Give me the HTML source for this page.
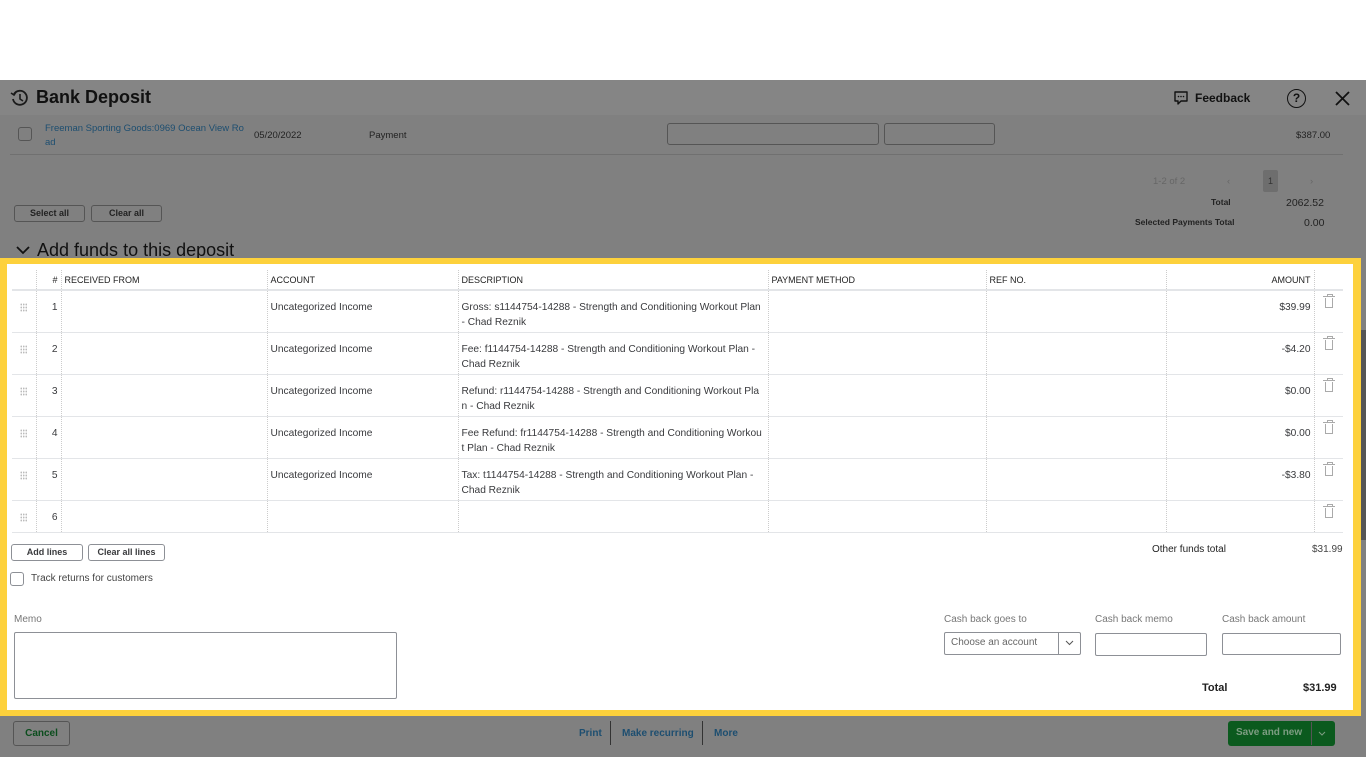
<!DOCTYPE html>
<html><head><meta charset="utf-8"><style>
*{box-sizing:border-box;margin:0;padding:0}
body{width:1366px;height:768px;position:relative;background:#fff;font-family:"Liberation Sans",sans-serif;overflow:hidden;color:#393a3d}
.a{position:absolute}
.gray{background:#808080}
.btn{position:absolute;border:1px solid #555;border-radius:3px;font-size:9px;font-weight:bold;text-align:center;color:#222}
.wbtn{position:absolute;border:1px solid #8d9096;border-radius:3px;font-size:9px;font-weight:bold;text-align:center;color:#393a3d;background:#fff}
table{border-collapse:collapse;position:absolute;left:12px;top:270px;width:1331px;font-size:10.2px;table-layout:fixed}
td,th{border-left:1px dotted #ccc;vertical-align:top;padding:0 3px;overflow:hidden}
th{font-size:9px;text-align:left;font-weight:normal;height:20px;vertical-align:middle;border-bottom:2px solid #e3e5e8;color:#222}
td{height:42px;border-bottom:1px solid #e3e5e8;padding-top:9px;line-height:15px;white-space:nowrap}
tr.last td{height:32px}
tr td:first-child,tr th:first-child{border-left:none}
.r{text-align:right}
.dots{width:7px;height:9px;margin:3px auto 0;background-image:radial-gradient(circle,#bbb 0.8px,transparent 1px);background-size:2.5px 3px}
.trash{display:block;width:8px;height:10px;border:1px solid #aaa;border-top:none;position:relative;margin:-2px auto 0 auto}
.trash:before{content:"";position:absolute;left:-3px;top:-2px;width:12px;height:1px;background:#aaa}
.trash:after{content:"";position:absolute;left:1px;top:-4px;width:4px;height:2px;border:1px solid #aaa;border-bottom:none}
.inp{position:absolute;border:1px solid #8d9096;border-radius:2px;background:#fff}
</style></head><body>
<div class="a gray" style="left:0;top:80px;width:1366px;height:677px"></div>
<div class="a" style="left:0;top:80px;width:1366px;height:35px;background:#858585"></div>
<svg class="a" style="left:10px;top:88px" width="20" height="20" viewBox="0 0 20 20"><path d="M4 6a7 7 0 1 1-1 5" fill="none" stroke="#1a1a1a" stroke-width="1.8"/><path d="M1 5l3 2 2-3" fill="none" stroke="#1a1a1a" stroke-width="1.6"/><path d="M10 6v5l3 2" fill="none" stroke="#1a1a1a" stroke-width="1.6"/></svg>
<div class="a" style="left:36px;top:87px;font-size:18px;font-weight:bold;color:#111">Bank Deposit</div>
<svg class="a" style="left:1173px;top:90px" width="16" height="16" viewBox="0 0 16 16"><path d="M2 2h12v9H8l-3 3v-3H2z" fill="none" stroke="#111" stroke-width="1.4" stroke-linejoin="round"/><circle cx="5.5" cy="6.5" r=".8" fill="#111"/><circle cx="8" cy="6.5" r=".8" fill="#111"/><circle cx="10.5" cy="6.5" r=".8" fill="#111"/></svg>
<div class="a" style="left:1195px;top:91px;font-size:12px;font-weight:bold;color:#111">Feedback</div>
<div class="a" style="left:1287px;top:89px;width:19px;height:19px;border:1.6px solid #111;border-radius:50%;font-size:12px;text-align:center;line-height:16px;color:#111;font-weight:bold">?</div>
<svg class="a" style="left:1335px;top:91px" width="15" height="15"><path d="M1 1l13 13M14 1L1 14" stroke="#111" stroke-width="1.8"/></svg>
<div class="a" style="left:18px;top:127px;width:14px;height:14px;border:1px solid #555;border-radius:3px"></div>
<div class="a" style="left:45px;top:122px;font-size:9.5px;color:#1d4e70;line-height:14px;width:200px">Freeman Sporting Goods:0969 Ocean View Ro<br>ad</div>
<div class="a" style="left:254px;top:130px;font-size:9.5px;color:#222">05/20/2022</div>
<div class="a" style="left:369px;top:130px;font-size:9.5px;color:#222">Payment</div>
<div class="a" style="left:667px;top:123px;width:212px;height:22px;border:1px solid #555;border-radius:3px"></div>
<div class="a" style="left:884px;top:123px;width:111px;height:22px;border:1px solid #555;border-radius:3px"></div>
<div class="a" style="left:1296px;top:130px;font-size:9.5px;color:#222">$387.00</div>
<div class="a" style="left:10px;top:154px;width:1333px;height:1px;background:#707070"></div>
<div class="a" style="left:1153px;top:176px;font-size:9.5px;color:#666">1-2 of 2</div>
<div class="a" style="left:1227px;top:176px;font-size:9.5px;color:#666">‹</div>
<div class="a" style="left:1263px;top:170px;width:15px;height:22px;background:#6e6e6e;border-radius:2px;font-size:9px;text-align:center;line-height:22px;color:#333">1</div>
<div class="a" style="left:1310px;top:176px;font-size:9.5px;color:#666">›</div>
<div class="a" style="left:1211px;top:197px;font-size:8.5px;font-weight:bold;color:#222">Total</div>
<div class="a" style="left:1286px;top:197px;font-size:10.5px;color:#222">2062.52</div>
<div class="a" style="left:1135px;top:217px;font-size:8.5px;font-weight:bold;color:#222">Selected Payments Total</div>
<div class="a" style="left:1304px;top:217px;font-size:10.5px;color:#222">0.00</div>
<div class="btn" style="left:14px;top:205px;width:71px;height:17px;line-height:15px">Select all</div>
<div class="btn" style="left:91px;top:205px;width:71px;height:17px;line-height:15px">Clear all</div>
<svg class="a" style="left:16px;top:246px" width="14" height="9"><path d="M1 1l6 6 6-6" fill="none" stroke="#111" stroke-width="1.8"/></svg>
<div class="a" style="left:37px;top:240px;font-size:18px;color:#111">Add funds to this deposit</div>
<div class="a" style="left:0;top:258px;width:1361px;height:458px;background:#fdd13c"></div>
<div class="a" style="left:7px;top:264px;width:1346px;height:446px;background:#fff"></div>
<div class="a" style="left:1361px;top:330px;width:5px;height:210px;background:#555"></div>
<table>
<colgroup><col style="width:24px"><col style="width:25px"><col style="width:206px"><col style="width:191px"><col style="width:310px"><col style="width:218px"><col style="width:180px"><col style="width:148px"><col style="width:29px"></colgroup>
<tr><th></th><th class="r">#</th><th>RECEIVED FROM</th><th>ACCOUNT</th><th>DESCRIPTION</th><th>PAYMENT METHOD</th><th>REF NO.</th><th class="r">AMOUNT</th><th></th></tr>
<tr><td><div class="dots"></div></td><td class="r">1</td><td></td><td>Uncategorized Income</td><td>Gross: s1144754-14288 - Strength and Conditioning Workout Plan<br>- Chad Reznik</td><td></td><td></td><td class="r">$39.99</td><td><span class="trash"></span></td></tr>
<tr><td><div class="dots"></div></td><td class="r">2</td><td></td><td>Uncategorized Income</td><td>Fee: f1144754-14288 - Strength and Conditioning Workout Plan -<br>Chad Reznik</td><td></td><td></td><td class="r">-$4.20</td><td><span class="trash"></span></td></tr>
<tr><td><div class="dots"></div></td><td class="r">3</td><td></td><td>Uncategorized Income</td><td>Refund: r1144754-14288 - Strength and Conditioning Workout Pla<br>n - Chad Reznik</td><td></td><td></td><td class="r">$0.00</td><td><span class="trash"></span></td></tr>
<tr><td><div class="dots"></div></td><td class="r">4</td><td></td><td>Uncategorized Income</td><td>Fee Refund: fr1144754-14288 - Strength and Conditioning Workou<br>t Plan - Chad Reznik</td><td></td><td></td><td class="r">$0.00</td><td><span class="trash"></span></td></tr>
<tr><td><div class="dots"></div></td><td class="r">5</td><td></td><td>Uncategorized Income</td><td>Tax: t1144754-14288 - Strength and Conditioning Workout Plan -<br>Chad Reznik</td><td></td><td></td><td class="r">-$3.80</td><td><span class="trash"></span></td></tr>
<tr class="last"><td><div class="dots"></div></td><td class="r">6</td><td></td><td></td><td></td><td></td><td></td><td></td><td><span class="trash"></span></td></tr>
</table>
<div class="wbtn" style="left:11px;top:544px;width:72px;height:17px;line-height:15px">Add lines</div>
<div class="wbtn" style="left:88px;top:544px;width:77px;height:17px;line-height:15px">Clear all lines</div>
<div class="a" style="left:1152px;top:544px;font-size:10px;color:#222">Other funds total</div>
<div class="a" style="left:1312px;top:544px;font-size:10px;color:#444">$31.99</div>
<div class="a" style="left:10px;top:572px;width:14px;height:14px;border:1px solid #8d9096;border-radius:3px"></div>
<div class="a" style="left:31px;top:573px;font-size:10px;color:#444">Track returns for customers</div>
<div class="a" style="left:14px;top:614px;font-size:10px;color:#777">Memo</div>
<div class="inp" style="left:14px;top:632px;width:383px;height:67px"></div>
<div class="a" style="left:944px;top:614px;font-size:10px;color:#777">Cash back goes to</div>
<div class="a" style="left:1095px;top:614px;font-size:10px;color:#777">Cash back memo</div>
<div class="a" style="left:1222px;top:614px;font-size:10px;color:#777">Cash back amount</div>
<div class="inp" style="left:944px;top:632px;width:137px;height:23px"></div>
<div class="a" style="left:951px;top:637px;font-size:10px;color:#666">Choose an account</div>
<div class="a" style="left:1058px;top:633px;width:1px;height:21px;background:#8d9096"></div>
<svg class="a" style="left:1065px;top:640px" width="9" height="6"><path d="M1 1l3.5 3.5L8 1" fill="none" stroke="#555"/></svg>
<div class="inp" style="left:1095px;top:633px;width:112px;height:23px"></div>
<div class="inp" style="left:1222px;top:633px;width:119px;height:22px"></div>
<div class="a" style="left:1202px;top:682px;font-size:11px;font-weight:bold;color:#222">Total</div>
<div class="a" style="left:1303px;top:682px;font-size:11px;font-weight:bold;color:#222">$31.99</div>
<div class="btn" style="left:13px;top:721px;width:57px;height:25px;line-height:23px;color:#0b4d1d;font-size:10px">Cancel</div>
<div class="a" style="left:579px;top:728px;font-size:10px;font-weight:bold;color:#1d4e70">Print</div>
<div class="a" style="left:610px;top:721px;width:1px;height:24px;background:#333"></div>
<div class="a" style="left:622px;top:728px;font-size:10px;font-weight:bold;color:#1d4e70">Make recurring</div>
<div class="a" style="left:702px;top:721px;width:1px;height:24px;background:#333"></div>
<div class="a" style="left:714px;top:728px;font-size:10px;font-weight:bold;color:#1d4e70">More</div>
<div class="a" style="left:1228px;top:721px;width:107px;height:25px;background:#0b5a1e;border-radius:3px"></div>
<div class="a" style="left:1236px;top:727px;font-size:10px;font-weight:bold;color:#7d9d82">Save and new</div>
<div class="a" style="left:1311px;top:722px;width:1px;height:23px;background:#555"></div>
<svg class="a" style="left:1318px;top:731px" width="8" height="5"><path d="M1 1l3 3 3-3" fill="none" stroke="#7d9d82"/></svg>
</body></html>
